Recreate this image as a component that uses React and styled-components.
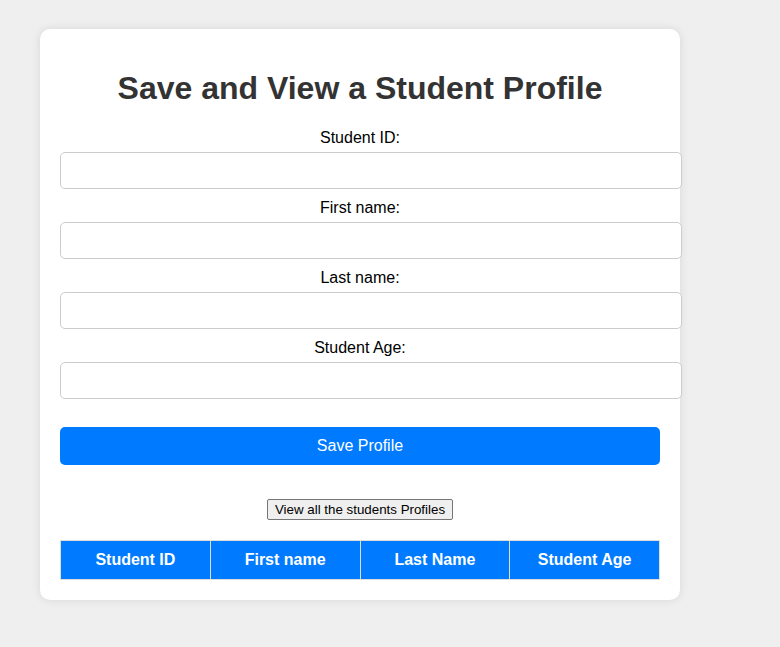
import React from 'react';
import styled, { createGlobalStyle } from 'styled-components';

const GlobalStyle = createGlobalStyle`
  body {
    margin: 0;
    background: #efefef;
    color: #000;
    font-family: "Liberation Sans", Arial, sans-serif;
    font-size: 16px;
    text-align: center;
  }
`;

const Page = styled.main`
  padding: 29px 100px 47px 40px;
`;

const Card = styled.section`
  padding: 20px;
  background: #fff;
  border-radius: 10px;
  box-shadow: 0 0 10px rgba(0, 0, 0, 0.1);
`;

const Title = styled.h1`
  margin: 20px 0 22px;
  font-size: 32px;
  line-height: 38px;
  color: #333;
`;

const Field = styled.div`
  margin-bottom: 10px;
`;

const Label = styled.label`
  display: block;
  margin-bottom: 5px;
  line-height: 18px;
`;

const Input = styled.input`
  display: block;
  width: 100%;
  box-sizing: content-box;
  margin: 0;
  padding: 10px;
  height: 15px;
  border: 1px solid #ccc;
  border-radius: 5px;
  font-family: inherit;
`;

const SaveButton = styled.button`
  display: block;
  width: 100%;
  margin-top: 28px;
  padding: 10px 20px;
  border: none;
  border-radius: 5px;
  background: #007bff;
  color: #fff;
  font-family: inherit;
  font-size: 16px;
  line-height: 18px;
  cursor: pointer;
`;

const ViewButton = styled.button`
  margin: 34px 0 20px;
  padding: 1px 7px;
  display: inline-block;
  vertical-align: top;
  border: 1px solid #767676;
  border-radius: 2px;
  background: #efefef;
  color: #000;
  font-family: inherit;
  line-height: 17px;
`;

const Table = styled.table`
  width: 100%;
  border-collapse: collapse;
  table-layout: fixed;
`;

const HeaderCell = styled.th`
  padding: 10px;
  border: 1px solid #ddd;
  background: #007bff;
  color: #fff;
  line-height: 18px;
`;

const fields = [
  { id: 'student-id', label: 'Student ID:' },
  { id: 'first-name', label: 'First name:' },
  { id: 'last-name', label: 'Last name:' },
  { id: 'student-age', label: 'Student Age:' },
];

const columns = ['Student ID', 'First name', 'Last Name', 'Student Age'];

export default function App() {
  return (
    <Page>
      <GlobalStyle />
      <Card>
        <Title>Save and View a Student Profile</Title>
        <form onSubmit={(event) => event.preventDefault()}>
          {fields.map(({ id, label }) => (
            <Field key={id}>
              <Label htmlFor={id}>{label}</Label>
              <Input id={id} name={id} type="text" />
            </Field>
          ))}
          <SaveButton type="submit">Save Profile</SaveButton>
        </form>
        <ViewButton type="button">View all the students Profiles</ViewButton>
        <Table>
          <thead>
            <tr>
              {columns.map((column) => (
                <HeaderCell key={column} scope="col">{column}</HeaderCell>
              ))}
            </tr>
          </thead>
        </Table>
      </Card>
    </Page>
  );
}
